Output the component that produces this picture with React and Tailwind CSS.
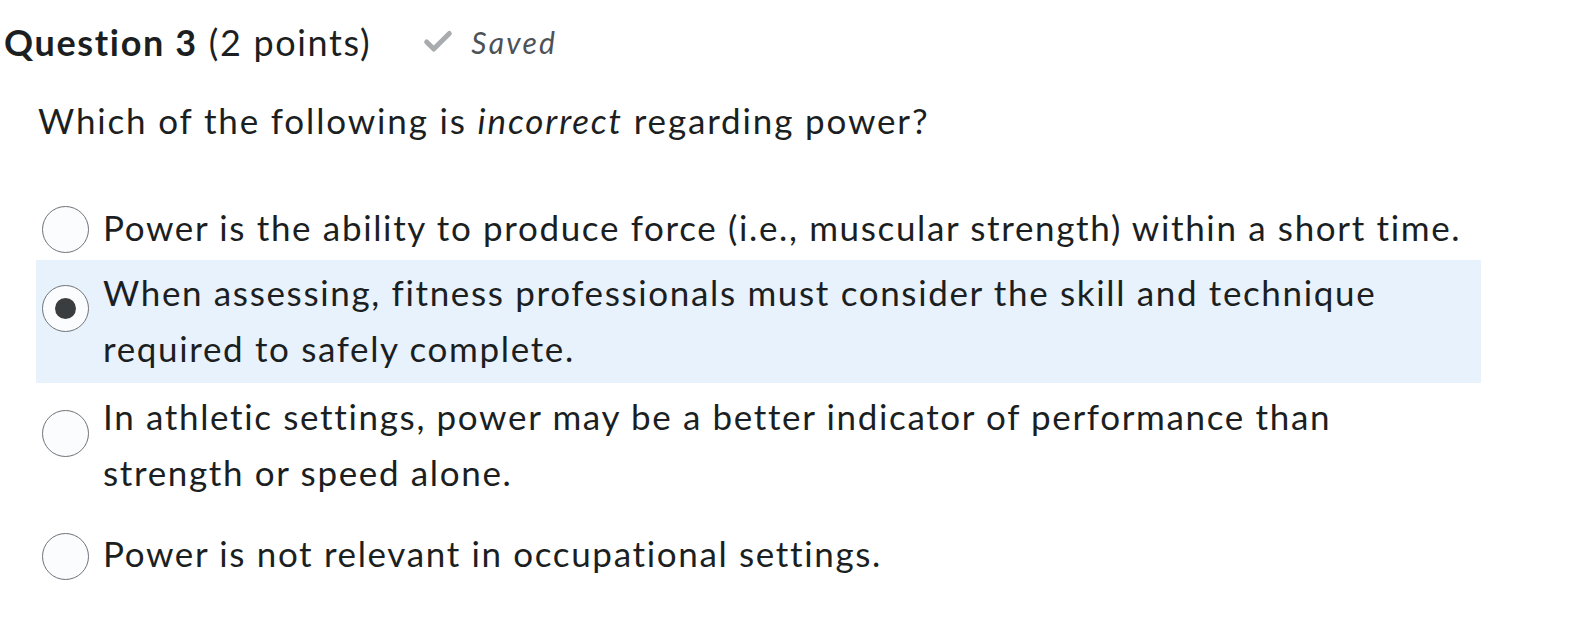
import { Check } from "lucide-react";

const Radio = ({ checked, className = "" }) => (
  <span
    className={`flex h-[47px] w-[47px] shrink-0 items-center justify-center rounded-full border-[1.5px] border-[#6f7479] bg-[#fbfcfe] ${className}`}
  >
    {checked && <span className="h-[21px] w-[21px] rounded-full bg-[#3a3d40]" />}
  </span>
);

const options = [
  {
    text: "Power is the ability to produce force (i.e., muscular strength) within a short time.",
    wrap: "mt-[201px]",
    radio: "mt-[5px]",
  },
  {
    text: "When assessing, fitness professionals must consider the skill and technique required to safely complete.",
    checked: true,
    wrap: "mt-[3px] pt-[6px] pb-[5px] bg-[#e8f2fc]",
    radio: "mt-[19px]",
  },
  {
    text: "In athletic settings, power may be a better indicator of performance than strength or speed alone.",
    wrap: "mt-[7px]",
    radio: "mt-[20px]",
  },
  {
    text: "Power is not relevant in occupational settings.",
    wrap: "mt-[25px]",
    radio: "mt-[6px]",
  },
];

export default function App() {
  return (
    <div className="relative h-[642px] w-[1569px] overflow-hidden bg-white font-['Lato','Open_Sans',sans-serif] text-[#1c1f22] [font-variant-ligatures:none]">
      {/* Encabezado */}
      <div className="absolute left-[4px] top-[19px] flex items-center">
        <h2 className="text-[36px] leading-[46px] tracking-[1.65px]">
          <span className="font-bold">Question 3</span> (2 points)
        </h2>
        <Check className="ml-[50px] h-[34px] w-[34px] text-[#a9acaf]" strokeWidth={3.5} />
        <span className="ml-[16px] text-[30px] italic tracking-[2.2px] text-[#4d5257]">Saved</span>
      </div>

      <p className="absolute left-[38px] top-[97px] text-[35px] leading-[46px] tracking-[1.85px]">
        Which of the following is <em>incorrect</em> regarding power?
      </p>

      {/* Opciones */}
      <div className="absolute left-0 top-0 w-full">
        {options.map((o, i) => (
          <div key={i} className={`ml-[36px] flex w-[1445px] items-start ${o.wrap}`}>
            <Radio checked={o.checked} className={`ml-[6px] ${o.radio}`} />
            <span className="relative -top-[2px] ml-[14px] w-[1370px] text-[35px] leading-[56px] tracking-[1.65px]">{o.text}</span>
          </div>
        ))}
      </div>
    </div>
  );
}
